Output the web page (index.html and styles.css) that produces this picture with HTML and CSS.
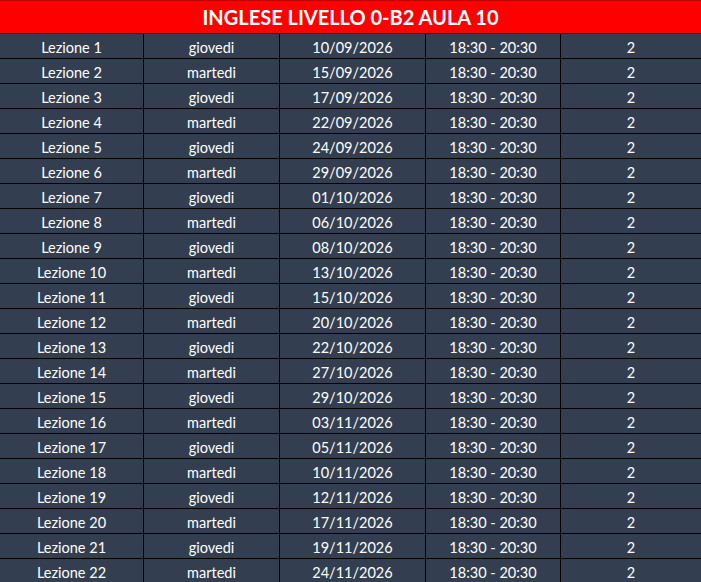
FILE: index.html
```html
<!DOCTYPE html>
<html lang="it">
<head>
<meta charset="utf-8">
<title>Inglese Livello 0-B2 Aula 10</title>
<link rel="stylesheet" href="styles.css">
</head>
<body>
<div class="sheet">
  <div class="title">INGLESE LIVELLO 0-B2 AULA 10</div>
  <div class="rows">
    <div class="row"><div class="cell">Lezione 1</div><div class="cell">giovedi</div><div class="cell">10/09/2026</div><div class="cell">18:30 - 20:30</div><div class="cell">2</div></div>
    <div class="row"><div class="cell">Lezione 2</div><div class="cell">martedi</div><div class="cell">15/09/2026</div><div class="cell">18:30 - 20:30</div><div class="cell">2</div></div>
    <div class="row"><div class="cell">Lezione 3</div><div class="cell">giovedi</div><div class="cell">17/09/2026</div><div class="cell">18:30 - 20:30</div><div class="cell">2</div></div>
    <div class="row"><div class="cell">Lezione 4</div><div class="cell">martedi</div><div class="cell">22/09/2026</div><div class="cell">18:30 - 20:30</div><div class="cell">2</div></div>
    <div class="row"><div class="cell">Lezione 5</div><div class="cell">giovedi</div><div class="cell">24/09/2026</div><div class="cell">18:30 - 20:30</div><div class="cell">2</div></div>
    <div class="row"><div class="cell">Lezione 6</div><div class="cell">martedi</div><div class="cell">29/09/2026</div><div class="cell">18:30 - 20:30</div><div class="cell">2</div></div>
    <div class="row"><div class="cell">Lezione 7</div><div class="cell">giovedi</div><div class="cell">01/10/2026</div><div class="cell">18:30 - 20:30</div><div class="cell">2</div></div>
    <div class="row"><div class="cell">Lezione 8</div><div class="cell">martedi</div><div class="cell">06/10/2026</div><div class="cell">18:30 - 20:30</div><div class="cell">2</div></div>
    <div class="row"><div class="cell">Lezione 9</div><div class="cell">giovedi</div><div class="cell">08/10/2026</div><div class="cell">18:30 - 20:30</div><div class="cell">2</div></div>
    <div class="row"><div class="cell">Lezione 10</div><div class="cell">martedi</div><div class="cell">13/10/2026</div><div class="cell">18:30 - 20:30</div><div class="cell">2</div></div>
    <div class="row"><div class="cell">Lezione 11</div><div class="cell">giovedi</div><div class="cell">15/10/2026</div><div class="cell">18:30 - 20:30</div><div class="cell">2</div></div>
    <div class="row"><div class="cell">Lezione 12</div><div class="cell">martedi</div><div class="cell">20/10/2026</div><div class="cell">18:30 - 20:30</div><div class="cell">2</div></div>
    <div class="row"><div class="cell">Lezione 13</div><div class="cell">giovedi</div><div class="cell">22/10/2026</div><div class="cell">18:30 - 20:30</div><div class="cell">2</div></div>
    <div class="row"><div class="cell">Lezione 14</div><div class="cell">martedi</div><div class="cell">27/10/2026</div><div class="cell">18:30 - 20:30</div><div class="cell">2</div></div>
    <div class="row"><div class="cell">Lezione 15</div><div class="cell">giovedi</div><div class="cell">29/10/2026</div><div class="cell">18:30 - 20:30</div><div class="cell">2</div></div>
    <div class="row"><div class="cell">Lezione 16</div><div class="cell">martedi</div><div class="cell">03/11/2026</div><div class="cell">18:30 - 20:30</div><div class="cell">2</div></div>
    <div class="row"><div class="cell">Lezione 17</div><div class="cell">giovedi</div><div class="cell">05/11/2026</div><div class="cell">18:30 - 20:30</div><div class="cell">2</div></div>
    <div class="row"><div class="cell">Lezione 18</div><div class="cell">martedi</div><div class="cell">10/11/2026</div><div class="cell">18:30 - 20:30</div><div class="cell">2</div></div>
    <div class="row"><div class="cell">Lezione 19</div><div class="cell">giovedi</div><div class="cell">12/11/2026</div><div class="cell">18:30 - 20:30</div><div class="cell">2</div></div>
    <div class="row"><div class="cell">Lezione 20</div><div class="cell">martedi</div><div class="cell">17/11/2026</div><div class="cell">18:30 - 20:30</div><div class="cell">2</div></div>
    <div class="row"><div class="cell">Lezione 21</div><div class="cell">giovedi</div><div class="cell">19/11/2026</div><div class="cell">18:30 - 20:30</div><div class="cell">2</div></div>
    <div class="row"><div class="cell">Lezione 22</div><div class="cell">martedi</div><div class="cell">24/11/2026</div><div class="cell">18:30 - 20:30</div><div class="cell">2</div></div>
  </div>
</div>
</body>
</html>
```

FILE: styles.css
```css
html, body {
  margin: 0;
  padding: 0;
  background: #333f50;
}
body {
  width: 701px;
  height: 582px;
  overflow: hidden;
  font-family: Lato, "Open Sans", sans-serif;
  color: #ffffff;
}
.sheet {
  display: flex;
  flex-direction: column;
  background: #000000;
}
.title {
  height: 33px;
  background: #ff0000;
  border-top: 1px solid #c00000;
  box-sizing: border-box;
  display: flex;
  align-items: center;
  justify-content: center;
  font-weight: bold;
  font-size: 20px;
  letter-spacing: 0;
}
.rows {
  display: flex;
  flex-direction: column;
  gap: 1px;
  padding-top: 1px;
  background: #000000;
}
.row {
  display: grid;
  grid-template-columns: 143px 135px 145px 134px 1fr;
  column-gap: 1px;
  height: 24px;
}
.cell {
  background: #333f50;
  display: flex;
  align-items: center;
  justify-content: center;
  font-size: 14.5px;
  padding-top: 2px;
  box-sizing: border-box;
}
```
